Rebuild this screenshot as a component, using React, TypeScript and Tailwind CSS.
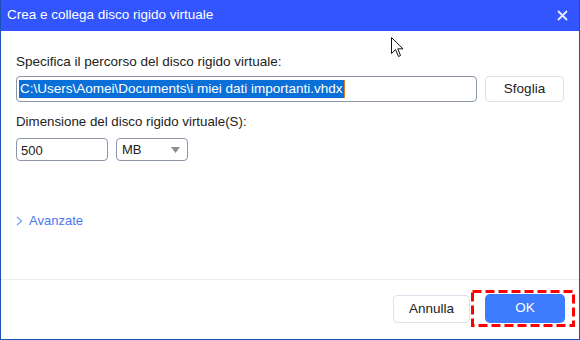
import React from 'react';

const font = { fontFamily: '"Liberation Sans", Arial, sans-serif' };

const Cursor = () => (
  <svg className="absolute left-[390px] top-[37px]" width="13" height="21" viewBox="0 0 13 21">
    <path d="M0.5 0.5 L0.5 16.5 L4.5 12.5 L7.5 19.5 L9.5 18.5 L6.8 11.8 L12 11.8 Z" fill="#fff" stroke="#111" strokeWidth="1" />
  </svg>
);

export default function App() {
  return (
    <div className="relative w-[580px] h-[340px] bg-white flex flex-col border-x border-b border-[#1c53b3] overflow-hidden" style={font}>
      {/* Title bar */}
      <div className="h-[31px] shrink-0 bg-[#3355ff] flex items-center justify-between pl-[6px] pr-[11px]">
        <span className="text-white text-[13.5px]">Crea e collega disco rigido virtuale</span>
        <svg width="11" height="11" viewBox="0 0 11 11">
          <path d="M1 1 L10 10 M10 1 L1 10" stroke="#e8ecff" strokeWidth="1.8" />
        </svg>
      </div>

      {/* Body */}
      <div className="flex-1 px-[15px] text-[#222]">
        <p className="mt-[22px] h-[18px] leading-[18px] text-[13.5px]">Specifica il percorso del disco rigido virtuale:</p>
        <div className="mt-[5px] flex gap-[8px]">
          <div className="w-[461px] h-[26px] rounded-[4px] border border-[#8c96a6] flex items-center pl-[2px]">
            <span className="bg-[#0a6fd8] text-white text-[13.5px] leading-[18px] px-[1px] border-r border-[#e07b2a]">
              C:\Users\Aomei\Documents\i miei dati importanti.vhdx
            </span>
          </div>
          <button className="w-[79px] h-[26px] rounded-[4px] border border-[#dce2ec] text-[13.5px] text-[#222] bg-white">Sfoglia</button>
        </div>

        <p className="mt-[11px] h-[18px] leading-[18px] text-[13.3px]">Dimensione del disco rigido virtuale(S):</p>
        <div className="mt-[7px] flex gap-[8px]">
          <div className="w-[92px] h-[23px] rounded-[4px] border border-[#8c96a6] flex items-center pl-[4px] pt-[2px] text-[13px]">500</div>
          <div className="w-[72px] h-[23px] rounded-[4px] border border-[#8c96a6] flex items-center justify-between pl-[5px] pr-[7px] text-[13px]">
            <span>MB</span>
            <svg width="9" height="6" viewBox="0 0 9 6">
              <path d="M0 0 L9 0 L4.5 6 Z" fill="#8a8f99" />
            </svg>
          </div>
        </div>

        <div className="mt-[51px] h-[18px] flex items-center gap-[6px] text-[#4a78f0] text-[13px]">
          <svg width="7" height="10" viewBox="0 0 7 10">
            <path d="M1 1 L5.5 5 L1 9" fill="none" stroke="#7aa0f5" strokeWidth="1.2" />
          </svg>
          <span>Avanzate</span>
        </div>
      </div>

      {/* Footer */}
      <div className="h-[60px] shrink-0 border-t border-[#ebebeb] flex items-start justify-end gap-[15px] pr-[14px] pt-[14px]">
        <button className="w-[77px] h-[28px] mt-[1px] rounded-[4px] border border-[#dce2ec] bg-white text-[13.5px] text-[#222]">Annulla</button>
        <button className="w-[80px] h-[29px] rounded-[5px] bg-[#3d7bff] text-white text-[13.5px]">OK</button>
      </div>

      {/* Highlight rectangle */}
      <svg className="absolute left-[470px] top-[290px]" width="104" height="37" viewBox="0 0 104 37">
        <rect x="1.5" y="1.5" width="101" height="34" fill="none" stroke="#ff0000" strokeWidth="3" strokeDasharray="9 4" />
      </svg>

      <Cursor />
    </div>
  );
}
